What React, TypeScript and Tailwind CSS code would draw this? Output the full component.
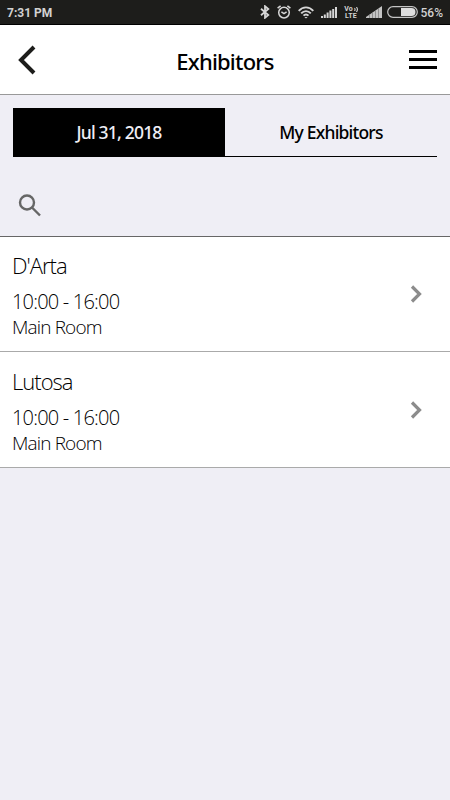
interface Exhibitor {
  name: string
  time: string
  room: string
}

const exhibitors: Exhibitor[] = [
  { name: "D'Arta", time: '10:00 - 16:00', room: 'Main Room' },
  { name: 'Lutosa', time: '10:00 - 16:00', room: 'Main Room' },
]

function SignalIcon() {
  return (
    <svg className="h-[12px] w-[16px]" viewBox="0 0 16 12" fill="#d6d6d6">
      <rect x="0" y="10" width="2" height="2" />
      <rect x="2.8" y="8.5" width="2" height="3.5" />
      <rect x="5.6" y="6.5" width="2" height="5.5" />
      <rect x="8.4" y="4.5" width="2" height="7.5" />
      <rect x="11.2" y="3" width="2" height="9" />
      <rect x="14" y="1" width="2" height="11" />
    </svg>
  )
}

function StatusBar() {
  return (
    <div className="flex h-[25px] items-center border-b border-black bg-[#1d1d1b] pl-[7px] font-['Roboto',sans-serif] text-[#d2d2d2]">
      <span className="pt-0.5 text-[12px] font-bold leading-none">7:31 PM</span>
      <svg className="ml-auto h-[14px] w-[10px]" viewBox="0 0 10 14" fill="none" stroke="#d6d6d6" strokeWidth="1.8">
        <path d="M1 3.8 8.3 10 5 12.8V1.2L8.3 4 1 10.2" />
      </svg>
      <svg className="ml-[7px] h-[14px] w-[14px]" viewBox="0 0 14 14" fill="none" stroke="#d6d6d6" strokeWidth="1.5">
        <circle cx="7" cy="7.6" r="5.3" />
        <path d="M.6 3.2 3.6.8M13.4 3.2 10.4.8M4.4 6.8 7 8.6 9.6 6.8" />
      </svg>
      <svg className="ml-[7px] h-[13px] w-[16px]" viewBox="0 0 16 13" fill="none" stroke="#d6d6d6" strokeWidth="1.9">
        <path d="M.7 4.9C4.9.2 11.1.2 15.3 4.9M3.2 7.4C6 4.3 10 4.3 12.8 7.4M5.5 9.7c1.5-1.6 3.5-1.6 5 0" />
        <path d="M6.4 10.9h3.2L8 12.6z" fill="#d6d6d6" stroke="none" />
      </svg>
      <span className="ml-[7px] flex"><SignalIcon /></span>
      <span className="ml-2 flex w-[13px] flex-col items-center pt-px text-[7px] font-bold leading-[7px]">
        <span className="flex items-center">
          Vo
          <svg className="ml-px h-[5px] w-[4px]" viewBox="0 0 4 5" fill="none" stroke="#d2d2d2" strokeWidth="1.1">
            <path d="M.5 1c.8 1 .8 2 0 3M2.4 0c1.3 1.6 1.3 3.4 0 5" />
          </svg>
        </span>
        <span className="tracking-[0.3px]">LTE</span>
      </span>
      <span className="ml-2 flex">
        <svg className="h-[12px] w-[16px]" viewBox="0 0 16 12">
          <path d="M0 12V11L16 0V12Z" fill="#c4c4c4" />
          <path d="M3.5 8v4M6.5 6v6M9.5 4v8M12.5 2v10" stroke="#777" strokeWidth=".7" />
        </svg>
      </span>
      <svg className="ml-[5px] h-[12px] w-[31px]" viewBox="0 0 31 12">
        <rect x=".7" y=".7" width="29.6" height="10.6" rx="5.3" fill="none" stroke="#c4c4c4" strokeWidth="1.2" />
        <path d="M14 2h10.5a4 4 0 0 1 0 8H14z" fill="#dedede" />
      </svg>
      <span className="ml-[3px] mr-[7px] pt-0.5 text-[12px] font-medium leading-none">56%</span>
    </div>
  )
}

function Header() {
  return (
    <header className="flex h-[70px] items-center justify-between border-b border-[#999] bg-white pl-[18px] pr-[13px]">
      <svg className="h-[30px] w-[30px]" viewBox="0 0 30 30" fill="none" stroke="#1d1d1b" strokeWidth="4">
        <path d="M16 2 3 15 16 28" />
      </svg>
      <h1 className="mr-[7px] pt-[3px] font-['Noto_Sans',sans-serif] text-[22px] font-medium leading-7 tracking-[-0.8px]">Exhibitors</h1>
      <div className="flex w-[28px] flex-col gap-[5px]">
        <span className="h-[3px] bg-black" />
        <span className="h-[3px] bg-black" />
        <span className="h-[3px] bg-black" />
      </div>
    </header>
  )
}

function ExhibitorRow({ name, time, room }: Exhibitor) {
  return (
    <li className="flex h-[115.4px] items-center justify-between border-b border-[#aaa] bg-white pl-3 pr-[28px] font-light">
      <div className="pt-0.5">
        <div className="text-[22px] leading-[30px] tracking-[-1px]">{name}</div>
        <div className="mt-[9px] text-[20px] leading-[25px] tracking-[-0.8px]">{time}</div>
        <div className="text-[19px] leading-[26px] tracking-[-0.85px]">{room}</div>
      </div>
      <svg className="h-[18px] w-[12px]" viewBox="0 0 12 18" fill="none" stroke="#8c8c8c" strokeWidth="3.2">
        <path d="M2 1.5 9.5 9 2 16.5" />
      </svg>
    </li>
  )
}

export default function App() {
  return (
    <div className="min-h-screen bg-[#efeef5] font-['Open_Sans',sans-serif] text-black">
      <StatusBar />
      <Header />
      <div className="h-[142px] border-b border-[#666] px-[13px] pt-[13px]">
        <div className="flex h-[49px] border-b border-black font-['Noto_Sans',sans-serif] text-[17.5px] font-medium">
          <button className="w-1/2 bg-black text-[#efeef5] tracking-[-0.8px]">Jul 31, 2018</button>
          <button className="w-1/2 tracking-[-0.8px]">My Exhibitors</button>
        </div>
        <svg className="ml-[5px] mt-[36px] h-6 w-6" viewBox="0 0 24 24" fill="none" stroke="#666" strokeWidth="2.4">
          <circle cx="9" cy="9.5" r="7" />
          <path d="m14 14.5 8 8" />
        </svg>
      </div>
      <ul>
        {exhibitors.map(item => (
          <ExhibitorRow key={item.name} {...item} />
        ))}
      </ul>
    </div>
  )
}
